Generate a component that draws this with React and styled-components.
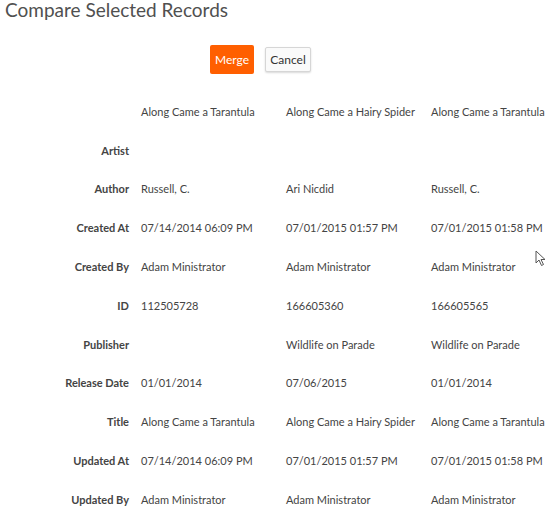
import React from 'react'
import styled, { createGlobalStyle } from 'styled-components'

const GlobalStyle = createGlobalStyle`
    html, body {
        margin: 0;
        padding: 0;
        background: #fff;
    }
    body {
        font-family: Lato, "Open Sans", sans-serif;
        color: #333;
        overflow: hidden;
    }
`

const Page = styled.div`
    position: relative;
    width: 550px;
    height: 519px;
    overflow: hidden;
`

const Title = styled.h1`
    margin: 0;
    padding: 0 0 0 5px;
    font-size: 19px;
    font-weight: 400;
    line-height: 20px;
    color: #505050;
`

const Actions = styled.div`
    display: flex;
    align-items: center;
    gap: 11px;
    padding-left: 210px;
    margin-top: 25px;
`

const Button = styled.button`
    font-family: Lato, sans-serif;
    font-size: 12px;
    cursor: pointer;
    border-radius: 2px;
    ${p => p.primary ? `
        background: #ff5f00;
        color: #fff;
        border: none;
        height: 29px;
        width: 44px;
        padding: 0;
    ` : `
        background: #fafafa;
        color: #333;
        border: 1px solid #d6d6d6;
        box-shadow: 0 1px 2px rgba(0,0,0,0.15);
        height: 25px;
        width: 46px;
        padding: 0;
    `}
`

const Table = styled.table`
    width: 570px;
    border-collapse: collapse;
    table-layout: fixed;
    margin-top: 18px;
    font-size: 11px;
`

const Row = styled.tr`
    height: 38.8px;
`

const Label = styled.th`
    width: 129px;
    padding: 0 6px 0 0;
    text-align: right;
    font-weight: 700;
    color: #444;
    white-space: nowrap;
`

const Cell = styled.td`
    width: 139px;
    padding: 0 0 0 6px;
    text-align: left;
    white-space: nowrap;
    color: #444;
`

const Cursor = styled.svg`
    position: absolute;
    left: 535px;
    top: 250px;
`

const headers = ['Along Came a Tarantula', 'Along Came a Hairy Spider', 'Along Came a Tarantula']

const rows = [
    ['Artist', '', '', ''],
    ['Author', 'Russell, C.', 'Ari Nicdid', 'Russell, C.'],
    ['Created At', '07/14/2014 06:09 PM', '07/01/2015 01:57 PM', '07/01/2015 01:58 PM'],
    ['Created By', 'Adam Ministrator', 'Adam Ministrator', 'Adam Ministrator'],
    ['ID', '112505728', '166605360', '166605565'],
    ['Publisher', '', 'Wildlife on Parade', 'Wildlife on Parade'],
    ['Release Date', '01/01/2014', '07/06/2015', '01/01/2014'],
    ['Title', 'Along Came a Tarantula', 'Along Came a Hairy Spider', 'Along Came a Tarantula'],
    ['Updated At', '07/14/2014 06:09 PM', '07/01/2015 01:57 PM', '07/01/2015 01:58 PM'],
    ['Updated By', 'Adam Ministrator', 'Adam Ministrator', 'Adam Ministrator'],
]

export default function App() {
    return (
        <Page>
            <GlobalStyle />
            <Title>Compare Selected Records</Title>
            <Actions>
                <Button primary>Merge</Button>
                <Button>Cancel</Button>
            </Actions>
            <Table>
                <tbody>
                    <Row>
                        <Label></Label>
                        {headers.map((h, i) => <Cell key={i}>{h}</Cell>)}
                    </Row>
                    {rows.map(r => (
                        <Row key={r[0]}>
                            <Label>{r[0]}</Label>
                            {r.slice(1).map((v, i) => <Cell key={i}>{v}</Cell>)}
                        </Row>
                    ))}
                </tbody>
            </Table>
            <Cursor width="12" height="18" viewBox="0 0 12 18">
                <path d="M1 1 L1 13 L4 10 L6.5 15.5 L8.5 14.5 L6 9.5 L10 9.5 Z" fill="#fff" stroke="#555" strokeWidth="1" strokeLinejoin="round" />
            </Cursor>
        </Page>
    )
}
